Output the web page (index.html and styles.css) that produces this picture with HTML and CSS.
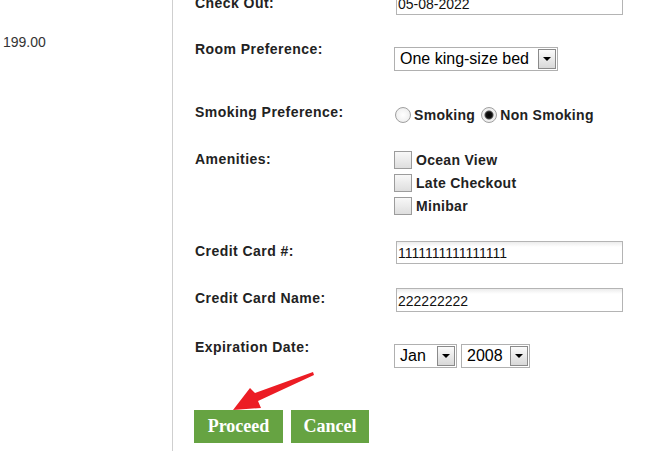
FILE: index.html
```html
<!DOCTYPE html>
<html>
<head>
<meta charset="utf-8">
<link rel="stylesheet" href="styles.css">
</head>
<body>
<div class="page">
  <div class="side">
    <div class="price">199.00</div>
  </div>
  <div class="main">
    <form class="form">
      <div class="row r1">
        <label class="lbl lbl-m3">Check Out:</label>
        <div class="field"><input class="txt" type="text" value="05-08-2022"></div>
      </div>
      <div class="row r2">
        <label class="lbl">Room Preference:</label>
        <div class="field fm6">
          <span class="sel sel-room"><span class="sel-val">One king-size bed</span><span class="sel-btn"><span class="tri"></span></span></span>
        </div>
      </div>
      <div class="row r3">
        <label class="lbl">Smoking Preference:</label>
        <div class="field fm3 radios">
          <label class="opt"><input type="radio" name="smk" class="rad">Smoking</label>
          <label class="opt"><input type="radio" name="smk" class="rad" checked>Non Smoking</label>
        </div>
      </div>
      <div class="row r4">
        <label class="lbl">Amenities:</label>
        <div class="field checks">
          <label class="opt"><input type="checkbox" class="chk">Ocean View</label>
          <label class="opt"><input type="checkbox" class="chk">Late Checkout</label>
          <label class="opt"><input type="checkbox" class="chk">Minibar</label>
        </div>
      </div>
      <div class="row r5">
        <label class="lbl lbl-m2">Credit Card #:</label>
        <div class="field"><input class="txt" type="text" value="1111111111111111"></div>
      </div>
      <div class="row r6">
        <label class="lbl lbl-m2">Credit Card Name:</label>
        <div class="field"><input class="txt txt-tall" type="text" value="222222222"></div>
      </div>
      <div class="row r7">
        <label class="lbl">Expiration Date:</label>
        <div class="field fm5 dates">
          <span class="sel sel-month"><span class="sel-val">Jan</span><span class="sel-btn"><span class="tri"></span></span></span>
          <span class="sel sel-year"><span class="sel-val">2008</span><span class="sel-btn"><span class="tri"></span></span></span>
        </div>
      </div>
      <div class="buttons">
        <button type="button" class="btn btn-proceed">Proceed</button>
        <button type="button" class="btn btn-cancel">Cancel</button>
      </div>
      <svg class="arrow" width="672" height="451" viewBox="0 0 672 451">
        <polygon points="313,372 255,393 250,388 233,410 261,408 258,401 314,375" fill="#ec1c24"/>
      </svg>
    </form>
  </div>
</div>
</body>
</html>
```

FILE: styles.css
```css
html, body {
  margin: 0;
  padding: 0;
  background: #fff;
  overflow: hidden;
}
body {
  font-family: "Liberation Sans", Arial, sans-serif;
  color: #222;
  width: 672px;
  height: 451px;
}
.page {
  display: grid;
  grid-template-columns: 172px 1px 1fr;
  height: 451px;
}
.side {
  padding: 34px 0 0 3px;
}
.price {
  font-size: 14px;
  line-height: 16px;
  color: #333;
}
.main {
  grid-column: 3;
  border-left: 1px solid #cfcfcf;
  margin-left: -1px;
  padding-left: 22px;
}
.form {
  display: flex;
  flex-direction: column;
  margin-top: -8px;
}
.row {
  display: grid;
  grid-template-columns: 201px 1fr;
  align-items: start;
}
.r1 { margin-bottom: 26px; }
.r2 { margin-bottom: 33px; }
.r3 { margin-bottom: 28px; }
.r4 { margin-bottom: 26px; }
.r5 { margin-bottom: 24px; }
.r6 { margin-bottom: 27px; }
.r7 { margin-bottom: 42px; }
.lbl {
  font-weight: bold;
  font-size: 14px;
  letter-spacing: 0.45px;
  line-height: 16px;
  color: #222;
}
.lbl-m3 { margin-top: 3px; }
.lbl-m2 { margin-top: 2px; }
.fm6 { margin-top: 6px; }
.fm5 { margin-top: 5px; }
.fm3 { margin-top: 3px; }
.txt {
  box-sizing: border-box;
  width: 227px;
  height: 23px;
  margin: 0;
  padding: 1px 0 0 1px;
  border: 1px solid #b4b4b4;
  background: linear-gradient(#ececec, #fff 5px, #fff);
  font-family: "Liberation Sans", Arial, sans-serif;
  font-size: 14px;
  color: #111;
  outline: none;
}
.txt-tall { height: 24px; }
.field.fm6, .dates { margin-left: -2px; }
.sel {
  box-sizing: border-box;
  display: inline-flex;
  align-items: center;
  height: 24px;
  border: 1px solid #b0b0b0;
  background: #fff;
  padding: 0 1px 0 5px;
  gap: 3px;
  font-family: "Liberation Sans", Arial, sans-serif;
  font-size: 16px;
  color: #000;
  vertical-align: top;
}
.sel-room { width: 164px; }
.sel-month { width: 63px; }
.sel-year { width: 69px; }
.sel-val {
  flex: 1;
  white-space: nowrap;
  line-height: 20px;
}
.sel-btn {
  box-sizing: border-box;
  width: 18px;
  height: 20px;
  border: 1px solid #8a8a8a;
  background: linear-gradient(#fbfbfb, #d8d8d8);
  display: flex;
  align-items: center;
  justify-content: center;
}
.tri {
  width: 0;
  height: 0;
  border-left: 4px solid transparent;
  border-right: 4px solid transparent;
  border-top: 4px solid #000;
}
.dates {
  display: flex;
  gap: 4px;
}
.radios {
  display: flex;
  align-items: center;
  height: 16px;
  gap: 6px;
  margin-left: -1px;
}
.opt {
  display: flex;
  align-items: center;
  font-weight: bold;
  font-size: 14px;
  letter-spacing: 0.3px;
  line-height: 16px;
  color: #222;
}
.rad {
  appearance: none;
  -webkit-appearance: none;
  box-sizing: border-box;
  width: 16px;
  height: 16px;
  margin: 0 3px 0 0;
  border-radius: 50%;
  border: 1px solid #a0a0a0;
  background: radial-gradient(circle, #fff 0, #f2f2f2 60%, #dcdcdc 100%);
}
.rad:checked {
  background: radial-gradient(circle, #000 0, #111 3px, #555 4px, #f0f0f0 5px, #e8e8e8 100%);
}
.checks {
  display: flex;
  flex-direction: column;
  gap: 5px;
  margin-left: -2px;
}
.checks .opt { height: 18px; }
.chk {
  appearance: none;
  -webkit-appearance: none;
  box-sizing: border-box;
  width: 18px;
  height: 18px;
  margin: 0 4px 0 0;
  border: 1px solid #9c9c9c;
  background: linear-gradient(#f8f8f8, #dedede);
}
.buttons {
  display: flex;
  gap: 8px;
  margin-left: -1px;
}
.btn {
  height: 33px;
  border: 0;
  margin: 0;
  padding: 0;
  background: #66a342;
  color: #fff;
  font-family: "Liberation Serif", "Times New Roman", serif;
  font-weight: bold;
  font-size: 18px;
}
.btn-proceed { width: 89px; }
.btn-cancel { width: 78px; }
.arrow {
  position: absolute;
  left: 0;
  top: 0;
  pointer-events: none;
}
```
